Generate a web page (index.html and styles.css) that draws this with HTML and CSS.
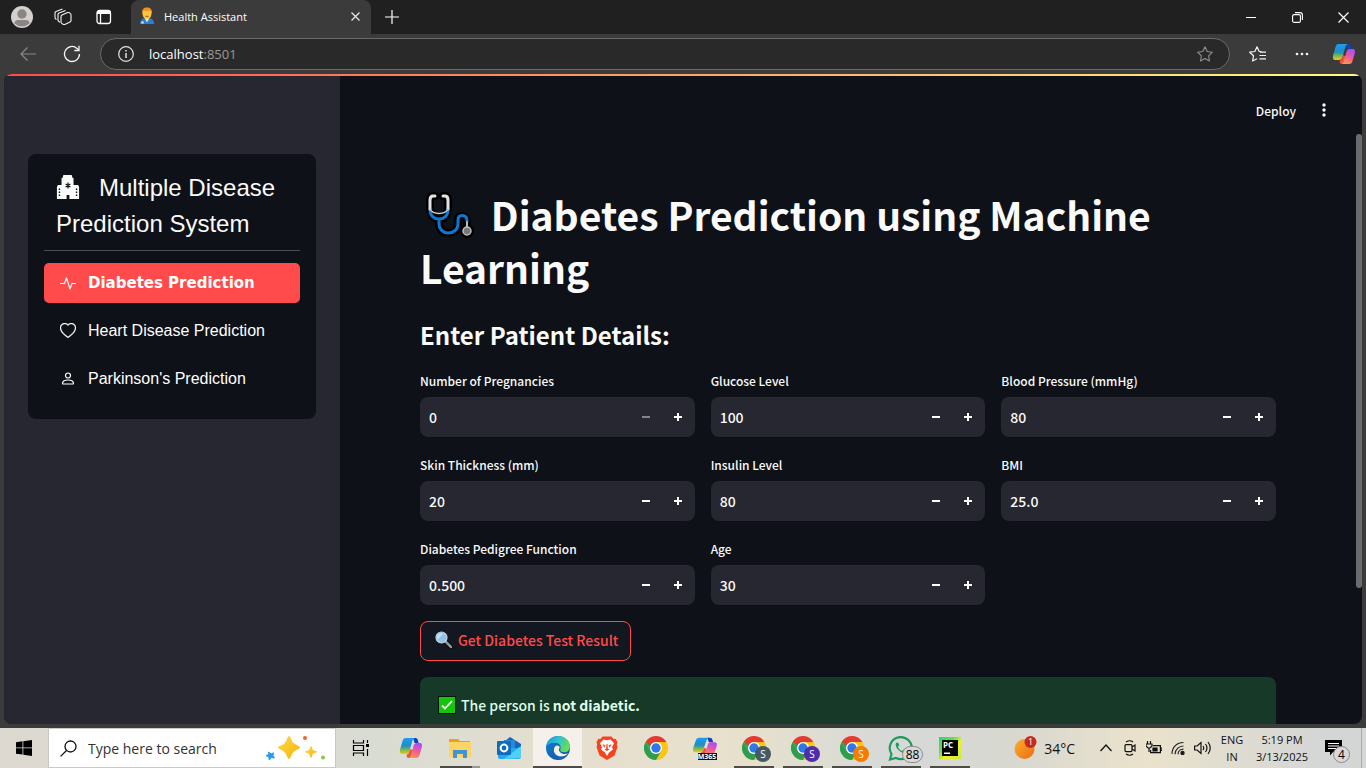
FILE: index.html
```html
<!DOCTYPE html>
<html lang="en">
<head>
<meta charset="utf-8">
<title>Health Assistant</title>
<link rel="stylesheet" href="styles.css">
</head>
<body>
<svg class="defs" aria-hidden="true">
  <defs>
    <linearGradient id="cpBlue" x1="0" y1="0" x2="0" y2="1"><stop offset="0" stop-color="#1f9cf0"/><stop offset=".5" stop-color="#1d8fc4"/><stop offset=".75" stop-color="#7fb94a"/><stop offset="1" stop-color="#f5c518"/></linearGradient>
    <linearGradient id="cpPink" x1=".7" y1="0" x2=".3" y2="1"><stop offset="0" stop-color="#a64dff"/><stop offset=".5" stop-color="#ee5a9a"/><stop offset="1" stop-color="#ff9a4a"/></linearGradient>
    <linearGradient id="edgeA" x1="0" y1="0" x2="1" y2=".4"><stop offset="0" stop-color="#1b8fe0"/><stop offset=".5" stop-color="#2cc3d2"/><stop offset="1" stop-color="#63dd5a"/></linearGradient>
    <linearGradient id="edgeB" x1="0" y1="0" x2="1" y2="1"><stop offset="0" stop-color="#1482d8"/><stop offset="1" stop-color="#0b4a9e"/></linearGradient>
    <linearGradient id="pc" x1="0" y1="0" x2="1" y2="1"><stop offset="0" stop-color="#21d789"/><stop offset=".35" stop-color="#5fe04a"/><stop offset=".6" stop-color="#f3f02a"/><stop offset="1" stop-color="#c8e83a"/></linearGradient>
    <linearGradient id="sun" x1="0" y1="0" x2="1" y2="1"><stop offset="0" stop-color="#fbb02c"/><stop offset="1" stop-color="#ee6a12"/></linearGradient>
    <linearGradient id="gold" x1="0" y1="0" x2="1" y2="1"><stop offset="0" stop-color="#ffd84a"/><stop offset="1" stop-color="#f5b50a"/></linearGradient>
    <symbol id="copilot" viewBox="0 0 24 24">
      <path d="M14 2h2.500c1.300 0 2 .8 2.300 2l.8 3h-4z" fill="#1440b8"/>
      <path d="M6.500 2H16c-1.500.4-2.200 1.600-2.700 3.300l-3 10.200c-.5 1.600-1.500 2.500-3 2.500H3.400C.9 18 .5 15.700 1.200 13l2.300-8C4 3.200 5 2 6.500 2z" fill="url(#cpBlue)"/>
      <path d="M8 18.500c1.200-.4 2-1.500 2.400-3l.8-2.500 3.800 2-2 7H9.800c-1.300 0-1.900-.9-2.200-2z" fill="#f0523c"/>
      <path d="M17.500 22H9.500c1.400-.4 2-1.600 2.500-3.300l2.600-9.200C15.100 7.900 16 7 17.500 7h3.200c2.300 0 2.700 2 2 4.500l-2.200 7.500c-.5 1.800-1.500 3-3 3z" fill="url(#cpPink)"/>
    </symbol>
    <symbol id="chrome" viewBox="0 0 24 24">
      <path d="M12 12 22.400 6A12 12 0 0 1 12 24z" fill="#fdc516"/>
      <path d="M12 12v0L6.800 15 1.600 6A12 12 0 0 0 12 24l5.200-9z" fill="#2f9e4b"/>
      <path d="M12 6h10.400L17.200 15z" fill="#fdc516"/>
      <path d="M1.600 6 6.800 15 12 6z" fill="#2f9e4b"/><path d="M1.600 6A12 12 0 0 1 22.400 6H12a6 6 0 0 0-5.200 3z" fill="#e53a30"/>
      <circle cx="12" cy="12" r="6" fill="#fff"/><circle cx="12" cy="12" r="4.700" fill="#2f78ea"/>
    </symbol>
    <symbol id="minus" viewBox="0 0 8 8"><path d="M0 3h8v2H0z"/></symbol>
    <symbol id="plus" viewBox="0 0 8 8"><path d="M0 3h3V0h2v3h3v2H5v3H3V5H0z"/></symbol>
  </defs>
</svg>

<div class="window">
  <header class="titlebar">
    <button class="tb-btn profile" aria-label="Profile">
      <svg width="22" height="22" viewBox="0 0 22 22"><circle cx="11" cy="11" r="11" fill="#d3d0cd"/><circle cx="11" cy="8" r="4.700" fill="#8b8683"/><path d="M3.500 17.500c0-2 1.200-3.500 3.500-3.500h8c2.300 0 3.500 1.500 3.500 3.500a11 11 0 0 1-15 0z" fill="#8b8683"/></svg>
    </button>
    <button class="tb-btn" aria-label="Workspaces">
      <svg width="18" height="18" viewBox="0 0 18 18" fill="none" stroke="#f2f2f2" stroke-width="1.100" stroke-linejoin="round"><path d="M7 8.500c0-.8.300-1.300 1-1.600l5.500-2.300c.8-.3 1.200-.1 1.800.2l.9.600c.5.300.8.800.8 1.500v5.500c0 .7-.3 1.200-1 1.500l-5.200 2.500c-.7.300-1.200.2-1.800-.2l-1.200-.8c-.5-.4-.8-.8-.8-1.500z"/><path d="M6 14.200 4.800 13.500c-.5-.3-.8-.8-.8-1.500V6.500c0-.8.300-1.200 1-1.500l6.500-2.500M2.500 11.500l-.7-.4c-.5-.3-.8-.8-.8-1.500V5c0-.8.300-1.200 1-1.500L8.500 1"/></svg>
    </button>
    <button class="tb-btn" aria-label="Tab actions">
      <svg width="16" height="16" viewBox="0 0 16 16" fill="none" stroke="#fff" stroke-width="1.300"><rect x="1" y="1.500" width="13.500" height="13" rx="2.500"/><path d="M1 3.500h13.500" stroke-width="3"/><path d="M4.500 4v10.500"/></svg>
    </button>
    <div class="tab">
      <svg width="16" height="18" viewBox="0 0 16 18"><path d="M1 17c0-3.500 2-5.500 4-5.500h6c2.500 0 4 2 4 5.500z" fill="#2b7fd0"/><path d="M5.500 11h5L8 15.500z" fill="#dcecf8"/><ellipse cx="8" cy="6.500" rx="4.500" ry="5.500" fill="#fcc43a"/><path d="M3 7C2.500 2 5 .5 8 .5S13.500 2 13 7c-1-.5-1-3-2-3.500-2 .8-4 .8-6 0C4 4 4 6.500 3 7z" fill="#f2921d"/><path d="M6.500 9.300h3" stroke="#8d5a12"/><circle cx="3.500" cy="15.500" r="1.300" fill="#bfe3fa"/></svg>
      <span class="tab-title">Health Assistant</span>
      <button class="tab-close" aria-label="Close tab"><svg width="9" height="9" viewBox="0 0 9 9" stroke="#e8e8e8" stroke-width="1.200"><path d="m.5.5 8 8m0-8-8 8"/></svg></button>
    </div>
    <button class="tb-btn" aria-label="New tab"><svg width="14" height="14" viewBox="0 0 14 14" stroke="#fff" stroke-width="1.200"><path d="M7 0v14M0 7h14"/></svg></button>
    <div class="win-controls">
      <button aria-label="Minimize"><svg width="10" height="10" viewBox="0 0 10 10" stroke="#fff"><path d="M0 5.500h10"/></svg></button>
      <button aria-label="Restore"><svg width="11" height="11" viewBox="0 0 11 11" fill="none" stroke="#fff" stroke-width="1.100"><rect x=".6" y="2.600" width="7.800" height="7.800" rx="1.500"/><path d="M3 .6h5c1.500 0 2.400 1 2.400 2.400V8"/></svg></button>
      <button aria-label="Close"><svg width="11" height="11" viewBox="0 0 11 11" stroke="#fff" stroke-width="1.200"><path d="m.5.5 10 10m0-10-10 10"/></svg></button>
    </div>
  </header>

  <nav class="toolbar" aria-label="Browser">
    <button class="tool" aria-label="Back"><svg width="16" height="14" viewBox="0 0 16 14" fill="none" stroke="#8a8a8a" stroke-width="1.200"><path d="M16 7H1m6.500-6.500L1 7l6.500 6.500"/></svg></button>
    <button class="tool" aria-label="Refresh"><svg width="18" height="18" viewBox="0 0 18 18" fill="none" stroke="#f4f4f4" stroke-width="1.300"><path d="M16.500 9A7.500 7.500 0 1 1 14 3.400L15.500 5"/><path d="M16 .8v4.700h-4.700"/></svg></button>
    <div class="address">
      <svg width="16" height="16" viewBox="0 0 16 16" fill="none" stroke="#e4e4e4" stroke-width="1.200"><circle cx="8" cy="8" r="7.300"/><path d="M8 7v5M8 4v1.600" stroke-width="1.500"/></svg>
      <span class="url">localhost<span class="port">:8501</span></span>
      <button class="fav" aria-label="Add to favorites"><svg width="16" height="16" viewBox="0 0 16 16" fill="none" stroke="#8f8f8f" stroke-width="1.100" stroke-linejoin="round"><path d="m8 .8 2.200 4.700 5.200.7-3.800 3.600.9 5.200L8 12.500 3.500 15l.9-5.200L.6 6.200l5.200-.7z"/></svg></button>
    </div>
    <button class="tool" aria-label="Favorites"><svg width="18" height="16" viewBox="0 0 18 16" fill="none" stroke="#f4f4f4" stroke-width="1.200" stroke-linejoin="round"><path d="M12.500 5.500 10.200 5.500 8 .8 5.900 5.500l-5.200.7 3.800 3.600-.9 5.200L8 12.800M11 6.200H17M10.500 9.500H17M10.500 12.800H17"/></svg></button>
    <button class="tool" aria-label="Settings and more"><svg width="14" height="4" viewBox="0 0 14 4" fill="#f4f4f4"><circle cx="2" cy="2" r="1.300"/><circle cx="7" cy="2" r="1.300"/><circle cx="12" cy="2" r="1.300"/></svg></button>
    <button class="tool last" aria-label="Copilot"><svg width="24" height="24"><use href="#copilot"/></svg></button>
  </nav>

  <div class="page">
    <div class="decoration"></div>
    <aside class="sidebar">
      <nav class="menu">
        <h2 class="menu-title"><svg class="hospital" width="24" height="24" viewBox="0 0 26 24" preserveAspectRatio="none" fill="#fafafa"><path fill-rule="evenodd" d="M8 0h9l1 3h1v7h5l1 2v12H1V12l1-2h4V3h1zM11.500 20h3v4h-3zM3 13.500h1.500V15H3zm0 3h1.500V18H3zm0 3h1.500V21H3zm18.500-6H23V15h-1.500zm0 3H23V18h-1.500zm0 3H23V21h-1.500z"/><path d="M13 7.500v6m-2.600-4.500 5.200 3m0-3-5.200 3" stroke="#0e1117" stroke-width="1.300"/></svg>Multiple Disease Prediction System</h2>
        <ul>
          <li><a class="active" href="#diabetes"><svg width="16" height="16" viewBox="0 0 16 16" fill="none" stroke="#fff" stroke-width="1.200" stroke-linejoin="round" stroke-linecap="round"><path d="M.5 8.500h4l2-5.500 3.500 11 2-5.500h3.500"/></svg>Diabetes Prediction</a></li>
          <li><a href="#heart"><svg width="16" height="16" viewBox="0 0 16 16" fill="#fff" stroke="#fff" stroke-width=".3"><path d="m8 2.748-.717-.737C5.600.281 2.514.878 1.400 3.053c-.523 1.023-.641 2.500.314 4.385.92 1.815 2.834 3.989 6.286 6.357 3.452-2.368 5.365-4.542 6.286-6.357.955-1.886.838-3.362.314-4.385C13.486.878 10.400.28 8.717 2.010L8 2.748zM8 15C-7.333 4.868 3.279-3.040 7.824 1.143c.06.055.119.112.176.171a3.120 3.120 0 0 1 .176-.17C12.720-3.042 23.333 4.867 8 15z"/></svg>Heart Disease Prediction</a></li>
          <li><a href="#parkinsons"><svg width="16" height="16" viewBox="0 0 16 16" fill="none" stroke="#fff" stroke-width="1.200" stroke-linejoin="round"><circle cx="8" cy="4.500" r="2.500"/><path d="M2.500 12.500c0-2.200 2.200-3.500 5.500-3.500s5.500 1.300 5.500 3.500c0 .4-.2.500-.5.500H3c-.3 0-.5-.1-.5-.5z"/></svg>Parkinson's Prediction</a></li>
        </ul>
      </nav>
    </aside>

    <main class="main">
      <div class="app-header">
        <button class="deploy">Deploy</button>
        <button class="kebab" aria-label="Main menu"><svg width="4" height="14" viewBox="0 0 4 14" fill="#fafafa"><circle cx="2" cy="2" r="1.700"/><circle cx="2" cy="7" r="1.700"/><circle cx="2" cy="12" r="1.700"/></svg></button>
      </div>
      <div class="scroll-row">
        <div class="content">
          <h1><svg class="stetho" width="50" height="50" viewBox="0 0 50 50" fill="none" stroke-linecap="round"><g stroke="#000" stroke-width="8" stroke-linejoin="round"><path d="M11 5H9c-2 0-3 1-3 4v8c0 8 4 11 9 11s9-3 9-11V9c0-3-1-4-3-4h-2M15 28v5c0 5 4 9 9 9s10-3 10-9v-4c0-3 1-4 4-4s5 2 5 5v6"/><circle cx="43" cy="40" r="3"/></g><path d="M6 18c0 7 4 10 9 10s9-3 9-10M15 28v5c0 5 4 9 9 9s10-3 10-9v-4c0-3 1-4.500 4-4.500s5 2 5 5.500" stroke="#0a78d6" stroke-width="3"/><path d="M11 5H9c-2 0-3 1-3 4v9M19 5h2c2 0 3 1 3 4v9" stroke="#e4e4e4" stroke-width="3"/><path d="M6 18c2 4 5 4.500 9 4.500s7-.5 9-4.500" stroke="#c9c9c9" stroke-width="1.500"/><path d="M43 31v5" stroke="#b8b8b8" stroke-width="2"/><circle cx="43" cy="40" r="4" fill="#777" stroke="#bdbdbd" stroke-width="1.500"/></svg> Diabetes Prediction using Machine Learning</h1>
          <h2 class="subhead">Enter Patient Details:</h2>
          <form class="fields">
            <div class="field"><label for="preg">Number of Pregnancies</label><div class="number"><input id="preg" value="0"><button type="button" aria-label="Decrease" disabled><svg width="8" height="8"><use href="#minus"/></svg></button><button type="button" aria-label="Increase"><svg width="8" height="8"><use href="#plus"/></svg></button></div></div>
            <div class="field"><label for="gluc">Glucose Level</label><div class="number"><input id="gluc" value="100"><button type="button" aria-label="Decrease"><svg width="8" height="8"><use href="#minus"/></svg></button><button type="button" aria-label="Increase"><svg width="8" height="8"><use href="#plus"/></svg></button></div></div>
            <div class="field"><label for="bp">Blood Pressure (mmHg)</label><div class="number"><input id="bp" value="80"><button type="button" aria-label="Decrease"><svg width="8" height="8"><use href="#minus"/></svg></button><button type="button" aria-label="Increase"><svg width="8" height="8"><use href="#plus"/></svg></button></div></div>
            <div class="field"><label for="skin">Skin Thickness (mm)</label><div class="number"><input id="skin" value="20"><button type="button" aria-label="Decrease"><svg width="8" height="8"><use href="#minus"/></svg></button><button type="button" aria-label="Increase"><svg width="8" height="8"><use href="#plus"/></svg></button></div></div>
            <div class="field"><label for="ins">Insulin Level</label><div class="number"><input id="ins" value="80"><button type="button" aria-label="Decrease"><svg width="8" height="8"><use href="#minus"/></svg></button><button type="button" aria-label="Increase"><svg width="8" height="8"><use href="#plus"/></svg></button></div></div>
            <div class="field"><label for="bmi">BMI</label><div class="number"><input id="bmi" value="25.0"><button type="button" aria-label="Decrease"><svg width="8" height="8"><use href="#minus"/></svg></button><button type="button" aria-label="Increase"><svg width="8" height="8"><use href="#plus"/></svg></button></div></div>
            <div class="field"><label for="dpf">Diabetes Pedigree Function</label><div class="number"><input id="dpf" value="0.500"><button type="button" aria-label="Decrease"><svg width="8" height="8"><use href="#minus"/></svg></button><button type="button" aria-label="Increase"><svg width="8" height="8"><use href="#plus"/></svg></button></div></div>
            <div class="field"><label for="age">Age</label><div class="number"><input id="age" value="30"><button type="button" aria-label="Decrease"><svg width="8" height="8"><use href="#minus"/></svg></button><button type="button" aria-label="Increase"><svg width="8" height="8"><use href="#plus"/></svg></button></div></div>
          </form>
          <button class="submit"><svg width="18" height="18" viewBox="0 0 18 18"><path d="m10 10 6 6" stroke="#000" stroke-width="4.500" stroke-linecap="round"/><path d="m10 10 6 6" stroke="#8e979d" stroke-width="2.500" stroke-linecap="round"/><circle cx="6.500" cy="6.500" r="5.500" fill="#8ec4ee" stroke="#c8d2d9" stroke-width="1.200"/><path d="M2.500 8.500a4.500 4.500 0 0 1 6-6z" fill="#bfe0f8"/></svg>Get Diabetes Test Result</button>
          <div class="success" role="status"><svg width="18" height="18" viewBox="0 0 18 18"><rect width="18" height="18" fill="#04150a"/><rect x="1" y="1" width="16" height="16" fill="#16c60c"/><path d="m4 9.500 3 3L14 5" fill="none" stroke="#fff" stroke-width="1.800"/></svg><p>The person is <strong>not diabetic.</strong></p></div>
        </div>
        <div class="scrollbar"><div class="thumb"></div></div>
      </div>
    </main>
  </div>

  <footer class="taskbar">
    <button class="start" aria-label="Start"><svg width="16" height="16" viewBox="0 0 16 16" fill="#000"><path d="M0 2.200 6.500 1.300v6.200H0zM7.300 1.200 16 0v7.500H7.300zM0 8.300h6.500v6.300L0 13.700zM7.300 8.300H16V16l-8.700-1.200z"/></svg></button>
    <label class="search">
      <svg width="17" height="17" viewBox="0 0 17 17" fill="none" stroke="#111" stroke-width="1.300"><circle cx="10.500" cy="6.500" r="5.500"/><path d="M6.500 10.500.6 16.400"/></svg>
      <input type="text" placeholder="Type here to search" aria-label="Type here to search">
      <svg width="62" height="26" viewBox="0 0 62 26"><path d="M24 1c1.500 0 2.500 5 4.500 7S35 11 35 12.500s-4.500 2.500-6.500 4.500S25.500 24 24 24s-2.500-5-4.500-7S13 14 13 12.500s4.500-2 6.500-4S22.500 1 24 1z" fill="url(#gold)"/><path d="M46 11c1 0 1 3 2 4s4 1 4 1.800-3 1-4 2-1 4-2 4-1-3-2-4-4-1.200-4-2 3-.8 4-1.800 1-4 2-4z" fill="url(#gold)"/><path d="M3.500 17 6 19l2.500-1.200L8 20.500l1.500 2.500-3-.5L4.300 25l-.5-3L1 20.500l3-1z" fill="#1c9ff0" stroke="#1c9ff0" stroke-linejoin="round"/><circle cx="40" cy="3" r="2" fill="#f0642d"/><circle cx="58" cy="22.500" r="2" fill="#8cc63f"/></svg>
    </label>
    <button class="slot view" aria-label="Task View"><svg width="18" height="16" viewBox="0 0 18 16" fill="none" stroke="#000" stroke-width="1.200"><path d="M1.500 0v3h10V0M1.500 16v-3h10v3M1.500 5.500h10v5h-10zM15.500 0v3M15.500 9v7"/><path d="M14 4h3v3h-3z" fill="#000" stroke="none"/></svg></button>
    <div class="apps">
      <button class="slot" aria-label="Copilot"><svg width="24" height="24"><use href="#copilot"/></svg></button>
      <button class="slot running multi" aria-label="File Explorer"><svg width="24" height="24" viewBox="0 0 24 24"><path d="M1 3h9l2 2h10v14H1z" fill="#e3a512"/><path d="M1 6h22v15H1z" fill="#fcd468"/><path d="M5 22v-8h14v8h-4v-4H9v4z" fill="#3d95d8"/></svg></button>
      <button class="slot" aria-label="Outlook"><svg width="26" height="24" viewBox="0 0 26 24"><path d="M14 1 25 8v3L14 15 4 9z" fill="#1466bd"/><path d="M8 4h11v8H8z" fill="#2b88d8"/><path d="M2 12h23v9c0 1-1 2-2 2H4c-1 0-2-1-2-2z" fill="#28a8ea"/><path d="M25 10v12L8 23z" fill="#50d0f5"/><rect x="1" y="5" width="14" height="14" rx="1" fill="#0f6cbd"/><circle cx="8" cy="12" r="3.400" fill="none" stroke="#fff" stroke-width="2"/></svg></button>
      <button class="slot running current" aria-label="Microsoft Edge"><svg width="24" height="24" viewBox="0 0 24 24"><circle cx="12" cy="12" r="12" fill="url(#edgeB)"/><path d="M.3 10C1.500 4 6.200 0 12 0c7 0 12 5 12 10.500 0 3.500-2.500 5.800-5.800 5.800-3 0-4.400-1.300-4-2.500C15 12 15.500 6.800 8.500 6.800 4 6.800 1.300 9 .3 10z" fill="url(#edgeA)"/><path d="M9 10.500c-3 4 0 10 6 10 3 0 5.500-1 7.500-3.500-3 1.500-6 1.300-8-.5-2-1.500-2-3.500-.8-4.700.5-2-3-3.500-4.700-1.300z" fill="#f3efe9"/><path d="M9 10.500c-3.500 4.500-.5 11 6 11 3 0 5.500-1.700 7-4a11.800 11.800 0 0 1-8 6.200C8 22 6 15 9 10.500z" fill="#1067bf"/></svg></button>
      <button class="slot" aria-label="Brave"><svg width="22" height="24" viewBox="0 0 22 24"><path d="M6.500.5h9L17.500 3l2-.3L21.500 6l-.7 3 .7 2-3 8.500L11 24l-7.500-4.500L.5 11l.7-2-.7-3L2.500 2.700l2 .3z" fill="#f5431d"/><path d="m11 4.200 3.500-.7 3.500 3.800-2 4 1 2.200-4 3L11 20l-2-3.500-4-3 1-2.200-2-4 3.500-3.800z" fill="#fff"/><path d="m6.500 8 3 1.500-1.200 2.200zM15.500 8l-3 1.500 1.200 2.200zM10.500 8h1l.3 4.500 1.500 1L11 15l-2.300-1.500 1.500-1z" fill="#f5431d"/></svg></button>
      <button class="slot" aria-label="Google Chrome"><svg width="24" height="24"><use href="#chrome"/></svg></button>
      <button class="slot" aria-label="Microsoft 365 Copilot"><svg width="26" height="24" viewBox="0 0 26 24"><svg width="26" height="20" viewBox="0 0 24 22" preserveAspectRatio="none"><use href="#copilot" width="24" height="24"/></svg><path d="M6 17h19v7H6z" fill="#111"/><text x="15" y="23" text-anchor="middle" class="m365">M365</text></svg></button>
      <button class="slot running" aria-label="Chrome, profile S"><svg width="24" height="24"><use href="#chrome"/></svg><span class="avatar slate">S</span></button>
      <button class="slot running" aria-label="Chrome, profile S"><svg width="24" height="24"><use href="#chrome"/></svg><span class="avatar violet">S</span></button>
      <button class="slot running" aria-label="Chrome, profile S"><svg width="24" height="24"><use href="#chrome"/></svg><span class="avatar orange">S</span></button>
      <button class="slot running" aria-label="WhatsApp"><svg width="25" height="25" viewBox="0 0 25 25" fill="none" stroke="#1f9b5c" stroke-width="2.200"><path d="M2 23.500 3.500 18A11 11 0 1 1 8 22z"/><path d="M8 7c-1 2 0 4.500 2.500 7s5.500 4 7.500 2.500l.5-1.500-3-1.500-1.500 1.500c-1.500-.5-3.500-2.500-4-4L11.300 9 10 6.500z" fill="#1f9b5c" stroke="none"/></svg><span class="count">88</span></button>
      <button class="slot running" aria-label="PyCharm"><svg width="22" height="22" viewBox="0 0 22 22"><path d="M0 0h22v22H0z" fill="url(#pc)"/><path d="M3 3h16v16H3z" fill="#000"/><text x="4" y="11" class="pc">PC</text><path d="M5 15.500h6V17H5z" fill="#fff"/></svg></button>
    </div>
    <div class="tray">
      <button class="weather" aria-label="Weather 34 degrees"><svg width="24" height="24" viewBox="0 0 24 24"><circle cx="10.500" cy="13" r="10" fill="url(#sun)"/><circle cx="16.500" cy="6" r="6" fill="#c42b1c"/><text x="16.500" y="9" text-anchor="middle" class="alert">1</text></svg><span>34°C</span></button>
      <button class="tray-icon" aria-label="Show hidden icons"><svg width="12" height="8" viewBox="0 0 12 8" fill="none" stroke="#111" stroke-width="1.300"><path d="m.5 7 5.500-6 5.500 6"/></svg></button>
      <button class="tray-icon" aria-label="Meet now"><svg width="12" height="16" viewBox="0 0 12 16" fill="none" stroke="#111" stroke-width="1.200"><rect x="1" y="4.600" width="7" height="7" rx="1"/><path d="m8 7 3-2v6L8 9M2 2q4-2.500 7 0M2 14q4 2.500 7 0"/></svg></button>
      <button class="tray-icon" aria-label="Battery charging"><svg width="16" height="14" viewBox="0 0 16 14" fill="none" stroke="#111" stroke-width="1.200"><path d="M7 4.600h7.400v7H4.600V9"/><path d="M14.500 7H16v2.500h-1.500M1.500 0v3M4.500 0v3M0 3h6v2L4 7H2L0 5zM3 7v4"/><path d="M7 7h4v3H7z" fill="#111"/></svg></button>
      <button class="tray-icon" aria-label="Network"><svg width="14" height="14" viewBox="0 0 14 14" fill="none" stroke="#222" stroke-width="1.200"><path d="M1 13C1 6 6 1.500 12.500 1.500M4 13.200c0-4.700 4-8.200 8.500-8.200M7 13.200c0-3 2.500-5 5.500-5"/><circle cx="11.500" cy="12" r="1.600" fill="#111"/></svg></button>
      <button class="tray-icon" aria-label="Volume"><svg width="17" height="14" viewBox="0 0 17 14" fill="none" stroke="#111" stroke-width="1.200"><path d="M.6 5v4h2.500L7 12.500v-11L3.100 5zM9 5q1.500 2 0 4M11.500 3q3 4 0 8M14 1q4.500 6 0 12"/></svg></button>
      <div class="lang"><span>ENG</span><span>IN</span></div>
      <div class="clock"><span>5:19 PM</span><span>3/13/2025</span></div>
      <button class="notes" aria-label="4 notifications"><svg width="17" height="16" viewBox="0 0 17 16"><path d="M0 0h17v12H8l-3 3.500V12H0z"/><path d="M3 3.500h11M3 6h11M3 8.500h8" stroke="#fff"/></svg><span class="badge">4</span></button>
    </div>
  </footer>
</div>
</body>
</html>
```

FILE: styles.css
```css
:root {
  --source: "Noto Sans CJK SC", "Noto Sans", sans-serif;
  --segoe: "Open Sans", "Noto Sans", sans-serif;
  --ink: #fafafa;
  --dark: #0e1117;
  --panel: #262730;
}
* { box-sizing: border-box; }
body { margin: 0; background: #3b3b3b; font-family: var(--segoe); }
button { border: 0; padding: 0; margin: 0; background: none; color: inherit; font: inherit; display: flex; align-items: center; justify-content: center; }
h1, h2, ul, p { margin: 0; padding: 0; }
svg { flex: none; }
.defs { position: absolute; width: 0; height: 0; }
.window { display: flex; flex-direction: column; height: 100vh; overflow: hidden; }

/* browser chrome */
.titlebar { display: flex; flex: none; height: 34px; background: #202020; padding-left: 1px; }
.tb-btn { width: 41px; }
.tb-btn:nth-child(3) { margin-right: 7px; }
.tab { display: flex; align-items: center; gap: 9px; width: 240px; padding: 0 8px 2px; background: #3b3b3b; border-radius: 8px 8px 0 0; color: #fff; font-size: 11px; }
.tab-title { flex: 1; }
.tab-close { width: 16px; height: 16px; }
.win-controls { display: flex; margin-left: auto; }
.win-controls button { width: 46px; }
.toolbar { display: flex; flex: none; align-items: center; height: 40px; padding: 0 2px 0 6px; }
.tool { width: 44px; height: 32px; }
.tool.last { width: 40px; }
.address { flex: 1; display: flex; align-items: center; gap: 15px; height: 32px; margin: 0 6px; padding: 0 16px 0 17px; border: 1px solid #6a6a6a; border-radius: 16px; background: #292929; }
.url { flex: 1; color: #fff; font-size: 13px; }
.port { color: #9a9a9a; }

/* app */
.page { position: relative; flex: 1; min-height: 0; display: flex; margin: 0 4px 4px; border-radius: 8px; background: var(--dark); overflow: hidden; color: var(--ink); font-family: var(--source); }
.decoration { position: absolute; top: 0; left: 0; right: 0; height: 2px; background: linear-gradient(90deg, #ff4b4b, #fffd80); }
.sidebar { flex: none; width: 336px; padding: 80px 24px; background: var(--panel); }
.menu { padding: 16px 16px 20px; border-radius: 8px; background: var(--dark); font-family: "Liberation Sans", sans-serif; }
.menu-title { padding: 0 12px 8px; border-bottom: 1px solid #4a4c52; font-size: 24px; font-weight: 400; line-height: 36px; }
.hospital { margin-right: 19px; vertical-align: -3px; }
.menu ul { display: flex; flex-direction: column; gap: 8px; margin-top: 12px; list-style: none; }
.menu a { display: flex; align-items: center; gap: 12px; height: 40px; padding: 0 16px; border-radius: 5px; color: #fff; font-size: 16px; text-decoration: none; }
.menu a.active { background: #ff4b4b; font-family: "DejaVu Sans", sans-serif; font-size: 15px; font-weight: 700; }
.main { flex: 1; min-width: 0; display: flex; flex-direction: column; }
.app-header { flex: none; display: flex; align-items: center; justify-content: flex-end; gap: 26px; height: 60px; padding: 12px 36px 0 0; font-size: 12px; font-weight: 500; }
.scroll-row { flex: 1; min-height: 0; display: flex; }
.content { flex: 1; min-width: 0; padding: 54px 80px 0; overflow: hidden; }
.scrollbar { width: 6px; }
.thumb { height: 77%; border-radius: 3px; background: #6b6c70; }
h1 { font-size: 39px; font-weight: 700; line-height: 53px; }
.stetho { margin: 0 8px 0 4px; vertical-align: -10px; }
.subhead { margin-top: 21px; font-size: 24px; font-weight: 700; line-height: 40px; }
.fields { display: grid; grid-template-columns: repeat(3, 1fr); gap: 16px; margin: 14px 0 16px; }
.field label { display: block; padding-bottom: 4px; font-size: 12px; font-weight: 500; line-height: 24px; }
.number { display: flex; height: 40px; padding-right: 1px; border-radius: 8px; background: var(--panel); }
.number input { flex: 1; min-width: 0; padding: 0 9px; border: 0; outline: 0; background: none; color: var(--ink); font-family: inherit; font-size: 14px; font-weight: 500; }
.number button { width: 32px; fill: #fff; }
.number button:disabled { fill: #808495; }
.submit { gap: 5px; height: 40px; padding: 0 12px 2px 14px; border: 1px solid #ff4b4b; border-radius: 8px; background: #131720; color: #ff4b4b; font-size: 14px; font-weight: 500; }
.success { display: flex; gap: 5px; height: 80px; margin-top: 16px; padding: 19px 18px; border-radius: 8px; background: #173928; color: #dffde9; font-size: 14px; font-weight: 500; line-height: 19px; }

/* taskbar */
.taskbar { display: flex; flex: none; height: 40px; color: #111; background: linear-gradient(90deg, #ddd8d0, #d9dcd3 27%, #e6dfcf 43%, #e7e1cc 55%, #d6d9d8 65%, #d8d8d0 74%, #eae2cb 84%, #d4d6d6 97%); }
.start { width: 48px; }
.search { display: flex; align-items: center; width: 288px; padding: 0 8px 0 11px; border: 1px solid #c9c7c4; background: #fff; }
.search input { flex: 1; min-width: 0; margin-left: 11px; padding: 0; border: 0; outline: 0; background: none; font-family: inherit; font-size: 14px; }
.search input::placeholder { color: #333; opacity: 1; }
.slot { position: relative; width: 49px; }
.view { width: 50px; }
.apps { display: flex; }
.running::after { content: ""; position: absolute; left: 5px; right: 4px; bottom: 0; height: 2px; background: #4e4b48; }
.multi::after { background: linear-gradient(90deg, #4e4b48 80%, #9a9792 80%); }
.current { background: #f5f0e9; }
.current::after { left: 0; right: 0; }
.avatar { position: absolute; left: 26px; top: 18px; width: 16px; height: 16px; border-radius: 50%; color: #fff; font-size: 10px; line-height: 16px; text-align: center; }
.slate { background: #455a64; }
.violet { background: #512da8; }
.orange { background: #f57c00; }
.count, .badge { position: absolute; border: 1px solid #8a8a88; border-radius: 9px; background: #d8d8d6; color: #000; font-size: 12px; line-height: 15px; text-align: center; }
.count { left: 26px; top: 18px; width: 21px; }
.m365 { fill: #fff; font: 700 7px "Open Sans", sans-serif; }
.pc { fill: #fff; font: 700 8px "Open Sans", sans-serif; }
.alert { fill: #fff; font: 9px "Open Sans", sans-serif; }
.tray { display: flex; align-items: center; margin-left: auto; margin-right: 4px; padding-right: 9px; border-right: 1px solid #a9a9a6; }
.tray > * { height: 40px; }
.weather { gap: 6px; margin-right: 19px; font-size: 14px; }
.tray-icon { width: 24px; }
.lang, .clock { display: flex; flex-direction: column; justify-content: center; align-items: center; font-size: 11px; line-height: 17px; }
.lang, .clock { padding-bottom: 1px; }
.lang { width: 36px; }
.clock { width: 64px; }
.notes { position: relative; width: 38px; }
.badge { left: 19px; top: 18px; width: 17px; }
```
